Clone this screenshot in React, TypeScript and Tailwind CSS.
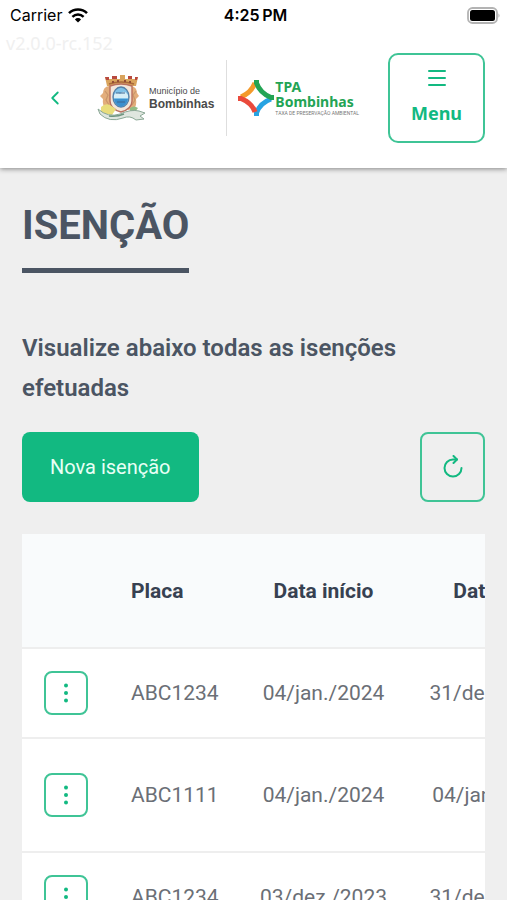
import { ChevronLeft, Menu } from "lucide-react";

interface Exemption {
  id: number;
  plate: string;
  start: string;
  end: string;
  tall?: boolean;
}

const exemptions: Exemption[] = [
  { id: 1, plate: "ABC1234", start: "04/jan./2024", end: "31/dez./2024" },
  { id: 2, plate: "ABC1111", start: "04/jan./2024", end: "04/jan./2025", tall: true },
  { id: 3, plate: "ABC1234", start: "03/dez./2023", end: "31/dez./2023" },
];

function WifiIcon() {
  return (
    <svg viewBox="0 0 20 15" className="w-5 h-4" aria-hidden="true">
      <path d="M10 15 6.9 11.9a4.4 4.4 0 0 1 6.2 0Z" fill="#000" />
      <path d="M4.4 9.3a8 8 0 0 1 11.2 0" fill="none" stroke="#000" strokeWidth="2.4" />
      <path d="M1 5.6a13 13 0 0 1 18 0" fill="none" stroke="#000" strokeWidth="2.6" />
    </svg>
  );
}

function BatteryIcon() {
  return (
    <svg viewBox="0 0 34 17" className="w-[34px] h-[17px]" aria-hidden="true">
      <rect x="1" y="1" width="29" height="15" rx="4.5" fill="#fff" stroke="#b3b3b3" strokeWidth="1.8" />
      <rect x="3" y="3" width="25" height="11" rx="2.5" fill="#000" />
      <path d="M31.5 6.2q2 2.3 0 4.6Z" fill="#aaa" />
    </svg>
  );
}

function Crest() {
  return (
    <svg viewBox="0 0 50 46" className="w-[50px] h-[46px] shrink-0" aria-hidden="true">
      {/* supporters */}
      <path d="M12 11q-6 1-6 7l-3 3 3 3q-1 6 3 10l6 1V11Z" fill="#e3ae7c" />
      <path d="M34 11q6 1 6 7l2 3-3 3q1 6-2 10l-6 1V11Z" fill="#e3ae7c" />
      <path d="M8 16l3 4-2 5 3 5M39 16l-3 4 2 5-3 5" fill="none" stroke="#c9966a" strokeWidth="1.2" />
      {/* crown */}
      <path d="M8 2h4v2h3V1h5v3h3V0h5v4h3V1h4v3h3V2h3l-2 9H10Z" fill="#d9a45d" />
      <path d="M8 2h4v3H9ZM15 1h5v3h-5ZM31 1h4v3h-4ZM38 2h3l-1 3h-2Z" fill="#b94a3f" />
      <path d="M12 9q12-4 25 0" fill="none" stroke="#a9683a" strokeWidth="1.4" />
      <path d="M16 6v2M21 5v2M28 5v2M33 6v2" stroke="#934c36" strokeWidth="2" />
      {/* shield */}
      <path d="M13 11q11-4 22 0v15q0 8-11 11-11-3-11-11Z" fill="#f4e6da" stroke="#b9705f" strokeWidth="1.4" />
      <ellipse cx="24" cy="22" rx="8" ry="10" fill="#7fc1e8" stroke="#557fa6" strokeWidth="1.3" />
      <path d="M17 20q3-4 6-1 4-5 8 1v3H17Z" fill="#d7eef7" />
      <path d="M17 24h14q-1 6-7 8-6-2-7-8Z" fill="#3b8fce" />
      <path d="M19 18h9M20 27h8" stroke="#3f6791" strokeWidth="1.2" />
      {/* plants and ribbon */}
      <path d="M4 32q4-4 9-2l6 4-4 6-11-2Z" fill="#e9dd7c" />
      <path d="M33 33q4-3 8 0l-3 4-5 1Z" fill="#92bd86" />
      <path d="M1 34q10 9 22 5 11-5 19-3l6 2-5 3 4 3-8 1q-6-5-13-2-14 5-23-4Z" fill="#dfe6df" stroke="#8ba896" strokeWidth="1" />
      <path d="M12 41q8 1 15-2" fill="none" stroke="#6f9581" strokeWidth="1.4" />
    </svg>
  );
}

function TpaMark() {
  return (
    <svg viewBox="0 0 36 36" className="w-9 h-9 shrink-0" fill="none" strokeWidth="5" aria-hidden="true">
      <path d="M17 3Q13 13 3 17" stroke="#f49a2c" />
      <path d="M33 19Q22 23 18.500 33v3" stroke="#27a3e2" />
      <path d="M0 18.500h3Q14 23 17 32" stroke="#ea4a3c" />
      <path d="M18.500 0v3Q22 13 33 17.500h3" stroke="#23a454" />
    </svg>
  );
}

function RefreshIcon() {
  return (
    <svg viewBox="0 0 22 24" className="w-[22px] h-6" fill="none" stroke="currentColor" strokeWidth="2" aria-hidden="true">
      <path d="M19.500 13a8.500 8.500 0 1 1-8.500-8.500h4" strokeLinecap="round" />
      <path d="m11.500 1 3.500 3.500-3.500 3.500" strokeLinecap="round" strokeLinejoin="round" />
    </svg>
  );
}

function DotsIcon() {
  return (
    <svg viewBox="0 0 6 20" className="w-[6px] h-5" fill="currentColor" aria-hidden="true">
      <circle cx="3" cy="2.500" r="2" />
      <circle cx="3" cy="10" r="2" />
      <circle cx="3" cy="17.500" r="2" />
    </svg>
  );
}

function StatusBar() {
  return (
    <div className="grid grid-cols-3 items-center h-[30px] pl-[10px] pr-[6px] font-['Inter',sans-serif] text-base text-black">
      <div className="flex items-center gap-[6px]">
        <span>Carrier</span>
        <WifiIcon />
      </div>
      <span className="text-center font-semibold">4:25{"\u2009"}PM</span>
      <div className="flex justify-end">
        <BatteryIcon />
      </div>
    </div>
  );
}

function Header() {
  return (
    <header className="relative z-10 shrink-0 bg-white shadow-[0_1px_5px_rgba(0,0,0,0.45)]">
      <StatusBar />
      <p className="absolute left-[6px] top-[30px] text-lg leading-[26px] text-[#f0f0f0] font-['Noto_Sans',sans-serif]">
        v2.0.0-rc.152
      </p>
      <div className="flex items-center justify-between pl-[44px] pr-[22px] pt-[23px] pb-[25px]">
        <div className="flex items-center">
          <button aria-label="Voltar" className="text-[#12b981]">
            <ChevronLeft className="w-[22px] h-[22px]" />
          </button>
          <div className="flex items-center gap-[2px] h-[76px] ml-[31px] pr-[12px] border-r border-[#dedede] font-['Liberation_Sans',sans-serif] text-[#4a4a4a]">
            <Crest />
            <div className="flex flex-col">
              <span className="text-[9px] leading-[12px]">Município de</span>
              <span className="text-[12px] leading-[14px] font-bold">Bombinhas</span>
            </div>
          </div>
          <div className="flex items-center gap-px ml-[11px] font-['Noto_Sans',sans-serif]">
            <TpaMark />
            <div className="flex flex-col font-bold text-[#23a454]">
              <span className="text-[14px] leading-[15px]">TPA</span>
              <span className="text-[14px] leading-[15px]">Bombinhas</span>
              <span className="text-[5px] leading-[8px] font-normal text-[#777] whitespace-nowrap font-['Roboto',sans-serif]">
                TAXA DE PRESERVAÇÃO AMBIENTAL
              </span>
            </div>
          </div>
        </div>
        <button className="flex flex-col items-center w-[97px] h-[90px] pt-[11px] gap-[9px] shrink-0 border-2 border-[#3fc496] rounded-[10px] text-[#12b981]">
          <Menu className="w-6 h-6" strokeWidth={2} />
          <span className="text-[18px] leading-[28px] font-bold font-['Noto_Sans',sans-serif]">Menu</span>
        </button>
      </div>
    </header>
  );
}

function ExemptionTable() {
  return (
    <div className="mt-[32px] overflow-x-auto [scrollbar-width:none] bg-white">
      <table className="table-fixed w-[556px] border-collapse text-[21px] leading-[32px]">
        <thead>
          <tr className="h-[114px] bg-[#f9fbfc] border-b-2 border-[#eeeeee] text-[#374151]">
            <th className="w-[87px]">
              <span className="sr-only">Ações</span>
            </th>
            <th className="w-[130px] px-[22px] text-left font-bold">Placa</th>
            <th className="w-[169px] font-bold">Data início</th>
            <th className="w-[170px] font-bold">Data fim</th>
          </tr>
        </thead>
        <tbody className="text-[#6b6f76]">
          {exemptions.map((item) => (
            <tr
              key={item.id}
              className={`border-b-2 border-[#eeeeee] ${item.tall ? "h-[114px]" : "h-[90px]"}`}
            >
              <td className="px-[22px]">
                <button
                  aria-label={`Opções de ${item.plate}`}
                  className="flex items-center justify-center w-[44px] h-[44px] border-2 border-[#3fc496] rounded-[8px] text-[#12b981]"
                >
                  <DotsIcon />
                </button>
              </td>
              <td className="px-[22px]">{item.plate}</td>
              <td className="text-center">{item.start}</td>
              <td className="text-center">{item.end}</td>
            </tr>
          ))}
        </tbody>
      </table>
    </div>
  );
}

export default function App() {
  return (
    <div className="flex flex-col h-screen overflow-hidden bg-[#efefef] font-['Roboto',sans-serif]">
      <Header />
      <main className="flex-1 min-h-0 overflow-y-auto [scrollbar-width:none] px-[22px] pt-[26px]">
        <h1 className="w-fit border-b-[5px] border-[#4b5563] pb-[10px] text-[40px] leading-[64px] font-bold text-[#4b5563]">
          ISENÇÃO
        </h1>
        <h2 className="mt-[55px] text-[24px] leading-[40px] font-semibold text-[#4b5563]">
          Visualize abaixo todas as isenções efetuadas
        </h2>
        <div className="flex items-center justify-between mt-[24px]">
          <button className="h-[70px] px-[28px] rounded-[8px] bg-[#12b981] text-[20px] text-[#e8fff5]">
            Nova isenção
          </button>
          <button
            aria-label="Atualizar"
            className="flex items-center justify-center w-[65px] h-[70px] border-2 border-[#3fc496] rounded-[8px] text-[#12b981]"
          >
            <RefreshIcon />
          </button>
        </div>
        <ExemptionTable />
      </main>
    </div>
  );
}
